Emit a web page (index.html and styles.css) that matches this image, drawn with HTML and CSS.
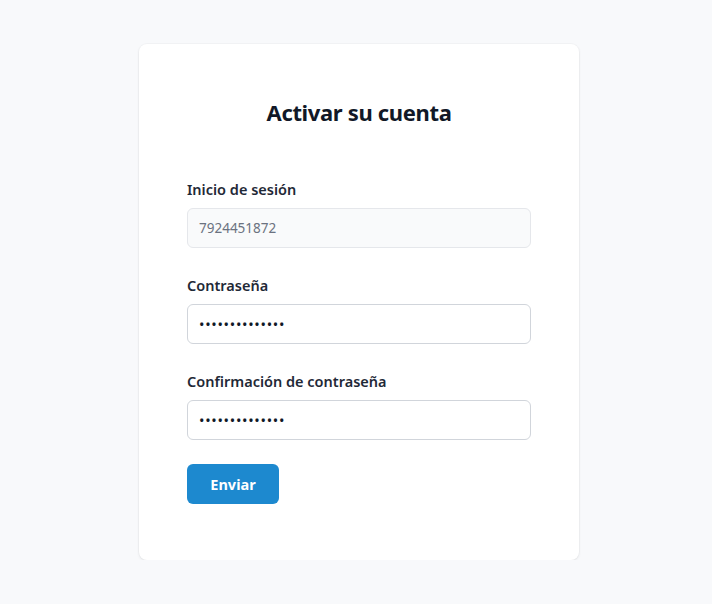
FILE: index.html
```html
<!DOCTYPE html>
<html lang="es">
<head>
<meta charset="utf-8">
<title>Activar su cuenta</title>
<link rel="stylesheet" href="styles.css">
</head>
<body>
<main class="page">
  <form class="card" onsubmit="return false">
    <h1 class="title">Activar su cuenta</h1>
    <div class="field">
      <label class="label" for="login">Inicio de sesión</label>
      <input class="input input-readonly" id="login" type="text" value="7924451872" readonly>
    </div>
    <div class="field">
      <label class="label" for="pwd">Contraseña</label>
      <input class="input input-pwd" id="pwd" type="password" value="passwordpasswo">
    </div>
    <div class="field field-last">
      <label class="label" for="pwd2">Confirmación de contraseña</label>
      <input class="input input-pwd" id="pwd2" type="password" value="passwordpasswo">
    </div>
    <button class="btn" type="submit">Enviar</button>
  </form>
</main>
</body>
</html>
```
FILE: styles.css
```css
* { box-sizing: border-box; }
html, body {
  margin: 0;
  padding: 0;
  background: #f8f9fb;
  font-family: "Noto Sans", "Open Sans", "DejaVu Sans", sans-serif;
  color: #111827;
}
.page {
  display: flex;
  justify-content: center;
  padding: 44px 0 0 6px;
}
.card {
  width: 440px;
  background: #ffffff;
  border-radius: 8px;
  box-shadow: 0 1px 3px rgba(0,0,0,0.08), 0 0 0 1px rgba(0,0,0,0.02);
  padding: 48px 48px 56px;
  display: flex;
  flex-direction: column;
}
.title {
  margin: 0 0 46px;
  text-align: center;
  font-size: 22px;
  line-height: 40px;
  font-weight: 700;
  letter-spacing: -0.35px;
  color: #111827;
}
.field {
  display: flex;
  flex-direction: column;
  margin-bottom: 26px;
}
.field-last { margin-bottom: 24px; }
.label {
  font-size: 14.5px;
  line-height: 22px;
  font-weight: 600;
  color: #1f2937;
  margin-bottom: 8px;
}
.input {
  height: 40px;
  width: 100%;
  border: 1px solid #d1d5db;
  border-radius: 6px;
  padding: 0 11px;
  font-family: inherit;
  font-size: 14px;
  color: #111827;
  background: #fff;
  outline: none;
}
.input-pwd {
  letter-spacing: 0.7px;
  font-size: 14.5px;
}
.input-readonly {
  background: #f9fafb;
  border-color: #e5e7eb;
  color: #6b7280;
  font-size: 13.5px;
}
.btn {
  align-self: flex-start;
  width: 92px;
  height: 40px;
  border: none;
  border-radius: 6px;
  background: #1d89cf;
  color: #ffffff;
  font-family: inherit;
  font-size: 14.5px;
  font-weight: 700;
  cursor: pointer;
}
```
